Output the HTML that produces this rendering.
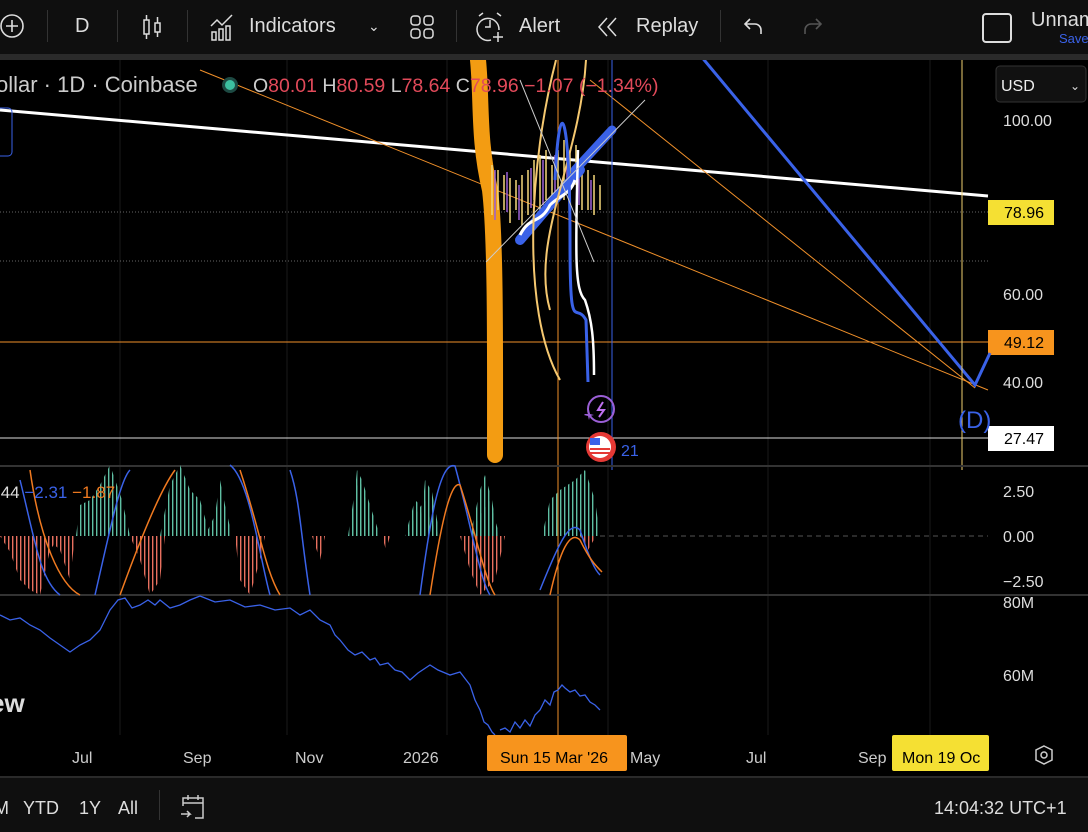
<!DOCTYPE html>
<html><head><meta charset="utf-8"><style>
body{margin:0;width:1088px;height:830px;background:#000;overflow:hidden;font-family:"Liberation Sans",sans-serif;position:relative}
.tb{position:absolute;left:0;top:0;width:1088px;height:54px;background:#0f0f0f;color:#ddd;font-size:20px}
.tb span{position:absolute;top:15px}
.sep{position:absolute;top:10px;width:1px;height:32px;background:#333}
.band{position:absolute;top:54px;left:0;width:1088px;height:6px;background:#2a2a2a}
.bot{position:absolute;left:0;top:776px;width:1088px;height:54px;background:#0f0f0f;border-top:2px solid #2a2a2a;color:#ddd;font-size:18px}
.bot span{position:absolute;top:20px}
svg text{font-family:"Liberation Sans",sans-serif}
</style></head><body>
<div class="tb">
<svg style="position:absolute;left:0;top:13px" width="28" height="28"><circle cx="12" cy="13" r="11" fill="none" stroke="#ddd" stroke-width="1.6"/><path d="M12 7v12M6 13h12" stroke="#ddd" stroke-width="1.6"/></svg>
<div class="sep" style="left:47px"></div>
<span style="left:75px">D</span>
<div class="sep" style="left:117px"></div>
<svg style="position:absolute;left:140px;top:12px" width="26" height="30" stroke="#ddd" fill="none" stroke-width="1.5"><rect x="4" y="8" width="5" height="14"/><path d="M6.5 3v5M6.5 22v5"/><rect x="15" y="11" width="5" height="9"/><path d="M17.5 5v6M17.5 20v5"/></svg>
<div class="sep" style="left:187px"></div>
<svg style="position:absolute;left:208px;top:12px" width="32" height="30" stroke="#ddd" fill="none" stroke-width="1.5"><path d="M3 14l6-6 5 5 10-10"/><rect x="4" y="20" width="4" height="8"/><rect x="11" y="17" width="4" height="11"/><rect x="18" y="14" width="4" height="14"/></svg>
<span style="left:249px">Indicators</span>
<span style="left:368px;font-size:14px;top:18px">&#8964;</span>
<svg style="position:absolute;left:408px;top:13px" width="28" height="28" stroke="#ddd" fill="none" stroke-width="1.5"><rect x="3" y="3" width="9" height="9" rx="3"/><rect x="16" y="3" width="9" height="9" rx="3"/><rect x="3" y="16" width="9" height="9" rx="3"/><rect x="16" y="16" width="9" height="9" rx="3"/></svg>
<div class="sep" style="left:456px"></div>
<svg style="position:absolute;left:474px;top:10px" width="34" height="34" stroke="#ddd" fill="none" stroke-width="1.5"><path d="M25 20a11 11 0 1 0-8 10"/><path d="M16 10v7h-5M5 6l4-3M27 6l-4-3M24 22v10M19 27h10"/></svg>
<span style="left:519px">Alert</span>
<svg style="position:absolute;left:596px;top:15px" width="26" height="24" stroke="#ddd" fill="none" stroke-width="1.5"><path d="M11 3L3 12l8 9M20 3l-8 9 8 9"/></svg>
<span style="left:636px">Replay</span>
<div class="sep" style="left:720px"></div>
<svg style="position:absolute;left:742px;top:15px" width="24" height="24" stroke="#ddd" fill="none" stroke-width="1.6"><path d="M8 4L3 9l5 5M3 9h10a6 6 0 0 1 6 6v4"/></svg>
<svg style="position:absolute;left:800px;top:15px" width="24" height="24" stroke="#555" fill="none" stroke-width="1.6"><path d="M16 4l5 5-5 5M21 9H11a6 6 0 0 0-6 6v4"/></svg>
<div style="position:absolute;left:982px;top:13px;width:26px;height:26px;border:2px solid #ddd;border-radius:4px"></div>
<span style="left:1031px;top:9px">Unnam</span>
<span style="left:1059px;top:31px;font-size:13px;color:#3a62e8">Save</span>
</div>
<div class="band"></div>
<svg style="position:absolute;left:0;top:60px" width="1088" height="716">
<defs>
<pattern id="pg" width="4" height="10" patternUnits="userSpaceOnUse"><rect x="0" y="0" width="1.4" height="10" fill="#5fbfa3"/></pattern>
<pattern id="pr" width="4" height="10" patternUnits="userSpaceOnUse"><rect x="0" y="0" width="1.4" height="10" fill="#e8705f"/></pattern>
</defs>
<g stroke="#1a1a1a" stroke-width="1">
<path d="M120 0v675M287 0v675M447 0v675M608 0v675M768 0v675M930 0v675"/>
</g>
<text x="1003" y="66" fill="#ddd" font-size="16">100.00</text>
<text x="1003" y="240" fill="#ddd" font-size="16">60.00</text>
<text x="1003" y="328" fill="#ddd" font-size="16">40.00</text>
<rect x="996" y="6" width="90" height="36" rx="4" fill="#111" stroke="#333"/>
<text x="1001" y="31" fill="#eee" font-size="16">USD</text>
<text x="1070" y="30" fill="#ddd" font-size="12">&#8964;</text>
<path d="M0 152H988M0 201H988" stroke="#666" stroke-dasharray="1 2"/>
<path d="M0 282H988" stroke="#f0902a"/>
<path d="M0 378H988" stroke="#ddd"/>
<rect x="988" y="140" width="66" height="25" fill="#f5e033"/><text x="1004" y="158" font-size="16" fill="#000">78.96</text>
<rect x="988" y="270" width="66" height="25" fill="#f7941d"/><text x="1004" y="288" font-size="16" fill="#000">49.12</text>
<rect x="988" y="366" width="66" height="25" fill="#fff"/><text x="1004" y="384" font-size="16" fill="#000">27.47</text>
<path d="M0 50L988 136" stroke="#fff" stroke-width="3"/>
<path d="M200 10L570 160L988 330" stroke="#f0902a" stroke-width="1"/>
<path d="M590 20L975 328" stroke="#f0902a" stroke-width="1"/>
<path d="M700 -5L975 325L990 293" stroke="#3a62e8" stroke-width="3" fill="none"/>
<path d="M962 0V410" stroke="#f0d070" stroke-width="1"/>
<path d="M612 0V410" stroke="#3a62e8" stroke-width="1"/>
<path d="M558 0V675" stroke="#f0902a" stroke-width="1"/>
<text x="958" y="368" font-size="24" fill="#3a62e8">(D)</text>
<path d="M478 0C482 40 478 80 490 130C496 180 495 300 495 395" stroke="#f39c12" stroke-width="16" stroke-linecap="round" fill="none"/>
<g stroke="#f5d87a" stroke-width="1.5">
<path d="M492 105v50M498 110v40M504 115v35M510 118v45M516 120v30M522 115v50M528 110v45M534 100v40M540 95v60M546 90v50M552 105v45M558 90v45M564 80v60M570 90v45M576 85v40M582 100v50M588 110v40M594 115v40M600 125v25"/>
</g>
<g stroke="#9b5fd6" stroke-width="1.5"><path d="M495 110v50M507 112v40M519 125v35M531 108v40M543 100v45M555 95v40M567 85v45M579 105v40M591 120v30"/></g>
<path d="M520 180L580 110" stroke="#3a62e8" stroke-width="10" stroke-linecap="round"/>
<path d="M575 110L612 70" stroke="#3a62e8" stroke-width="9" stroke-linecap="round"/>
<path d="M520 175c10-20 20-10 30-30 10-10 20-10 25-25" stroke="#fff" stroke-width="3" fill="none"/>
<path d="M556 0C530 100 520 250 560 320" stroke="#f5c870" stroke-width="2" fill="none"/>
<path d="M586 0C580 100 530 180 550 250" stroke="#f5c870" stroke-width="2" fill="none"/>
<path d="M555 120C560 20 570 60 570 180C570 280 575 240 586 260L588 322" stroke="#3a62e8" stroke-width="3" fill="none"/>
<path d="M578 90C575 200 575 230 585 240C592 260 594 280 594 315" stroke="#fff" stroke-width="2.5" fill="none"/>
<path d="M486 202L645 40M520 20L594 202" stroke="#ccc" stroke-width="1"/>
<circle cx="601" cy="349" r="13" fill="none" stroke="#9b5fd6" stroke-width="2"/><path d="M603 342l-5 8h6l-5 7" stroke="#c070f0" stroke-width="2" fill="none"/>
<path d="M585 354l3 0 1-4 1 4 4 1-4 1-1 4-1-4-4-1z" fill="#9b5fd6"/>
<circle cx="601" cy="387" r="15" fill="#e53935"/><circle cx="600" cy="387" r="11" fill="#fff"/><rect x="590" y="378" width="10" height="7" fill="#3a62e8"/><path d="M590 389h20M590 393h20" stroke="#e53935" stroke-width="2"/>
<text x="621" y="396" fill="#3a62e8" font-size="16">21</text>
<text x="-4" y="32" fill="#ccc" font-size="22">ollar · 1D · Coinbase</text>
<circle cx="230" cy="25" r="8" fill="#1d4a43"/><circle cx="230" cy="25" r="5" fill="#3cc0a0"/>
<text x="253" y="32" font-size="19.5" fill="#e24a5a"><tspan fill="#ccc">O</tspan>80.01 <tspan fill="#ccc">H</tspan>80.59 <tspan fill="#ccc">L</tspan>78.64 <tspan fill="#ccc">C</tspan>78.96 −1.07 (−1.34%)</text>
<rect x="-6" y="48" width="18" height="48" rx="4" fill="none" stroke="#3a62e8"/>
<rect x="0" y="405" width="1088" height="2" fill="#333"/>
<rect x="0" y="534" width="1088" height="2" fill="#333"/>
<text x="1003" y="437" fill="#ddd" font-size="16">2.50</text>
<text x="1003" y="482" fill="#ddd" font-size="16">0.00</text>
<text x="1003" y="527" fill="#ddd" font-size="16">−2.50</text>
<path d="M600 476H988" stroke="#555" stroke-dasharray="5 4"/>
<g fill="url(#pg)">
<path d="M76 476L80 445 90 440 100 425 110 405 122 440 130 476z"/>
<path d="M160 476L170 425 180 405 190 430 200 440 210 476z"/>
<path d="M205 476L215 455 220 420 225 445 232 476z"/>
<path d="M348 476L355 430 360 420 366 440 372 476z"/>
<path d="M408 476L415 455 425 440 430 460 440 476z"/>
<path d="M470 476L480 455 490 440 495 460 500 476z"/>
<path d="M350 476L357 410 362 420 370 445 380 476z"/>
<path d="M405 476L415 440 420 445 425 476z"/>
<path d="M420 476L425 420 432 432 440 476z"/>
<path d="M470 476L480 430 485 415 492 440 498 476z"/>
<path d="M542 476L550 440 560 430 575 420 585 410 595 440 600 476z"/>
</g>
<g fill="url(#pr)">
<path d="M0 476L10 492 20 520 30 530 40 535 50 490 60 476z"/>
<path d="M45 476L60 490 70 520 75 476z"/>
<path d="M130 476L140 500 150 535 160 520 165 476z"/>
<path d="M235 476L240 520 250 535 260 500 265 476z"/>
<path d="M312 476L320 500 325 476z"/>
<path d="M382 476L386 490 390 476z"/>
<path d="M460 476L470 510 480 535 495 520 505 476z"/>
<path d="M580 476L588 490 596 476z"/>
</g>
<path d="M20 420C35 480 40 520 60 535M95 535C110 470 120 420 130 410M230 405C250 420 260 500 270 535M290 410C300 440 300 470 310 535M420 535C430 460 440 400 455 406C470 460 480 520 490 535M540 530C560 480 570 460 580 470C590 500 595 510 600 515" stroke="#3a62e8" stroke-width="1.5" fill="none"/>
<path d="M30 410C40 480 60 525 80 535M120 535C140 480 160 430 175 410M240 410C260 470 265 510 280 535M430 535C440 470 450 420 460 425C475 470 485 520 495 535M550 535C560 490 570 470 580 480C590 500 595 505 602 512" stroke="#f07a20" stroke-width="1.5" fill="none"/>
<text x="-4" y="438" font-size="17" fill="#ddd">.44 <tspan fill="#3a62e8">−2.31</tspan> <tspan fill="#f07a20">−1.87</tspan></text>
<text x="1003" y="548" fill="#ddd" font-size="16">80M</text>
<text x="1003" y="621" fill="#ddd" font-size="16">60M</text>
<path d="M0 555L10 560 20 558 30 565 40 570 50 578 60 585 70 592 80 585 90 580 100 570 105 560 110 550 118 540 125 538 132 548 140 545 148 540 155 545 160 540 170 548 180 545 190 540 200 536 215 542 230 540 245 547 260 545 275 550 290 548 300 555 310 550 320 560 330 565 335 575 340 580 348 590 355 595 362 592 370 600 375 598 380 605 388 603 395 610 402 612 410 620 418 613 430 605 438 610 450 615 460 612 470 625 475 640 480 650 484 662 488 665 492 672 495 675M500 670L505 668 510 672 515 662 520 668 525 660 530 666 535 655 540 650 545 640 550 645 554 632 558 630 562 625 565 628 570 632 575 630 580 636 585 635 590 642 595 645 600 650" stroke="#3a62e8" stroke-width="1.3" fill="none"/>
<text x="-10" y="652" font-size="26" font-weight="bold" fill="#ddd">ew</text>
<g fill="#ccc" font-size="16"><text x="72" y="703">Jul</text><text x="183" y="703">Sep</text><text x="295" y="703">Nov</text><text x="403" y="703">2026</text><text x="630" y="703">May</text><text x="746" y="703">Jul</text><text x="858" y="703">Sep</text></g>
<rect x="487" y="675" width="140" height="36" rx="2" fill="#f7941d"/><text x="500" y="703" font-size="16" fill="#000">Sun 15 Mar '26</text>
<rect x="892" y="675" width="97" height="36" rx="2" fill="#f5e033"/><text x="902" y="703" font-size="16" fill="#000">Mon 19 Oc</text>
<path d="M1044 686l8 4v10l-8 4-8-4v-10z" fill="none" stroke="#ccc" stroke-width="1.5"/><circle cx="1044" cy="695" r="3" fill="none" stroke="#ccc" stroke-width="1.5"/>
</svg>
<div class="bot">
<span style="left:-6px">M</span><span style="left:23px">YTD</span><span style="left:79px">1Y</span><span style="left:118px">All</span>
<div style="position:absolute;left:159px;top:12px;width:1px;height:30px;background:#333"></div>
<svg style="position:absolute;left:178px;top:14px" width="30" height="30" stroke="#ccc" fill="none" stroke-width="1.5"><path d="M5 14V6h20v20h-8M5 11h20M10 3v5M20 3v5M3 22h9l-3-3M12 22l-3 3"/></svg>
<span style="left:934px">14:04:32 UTC+1</span>
</div>
</body></html>
